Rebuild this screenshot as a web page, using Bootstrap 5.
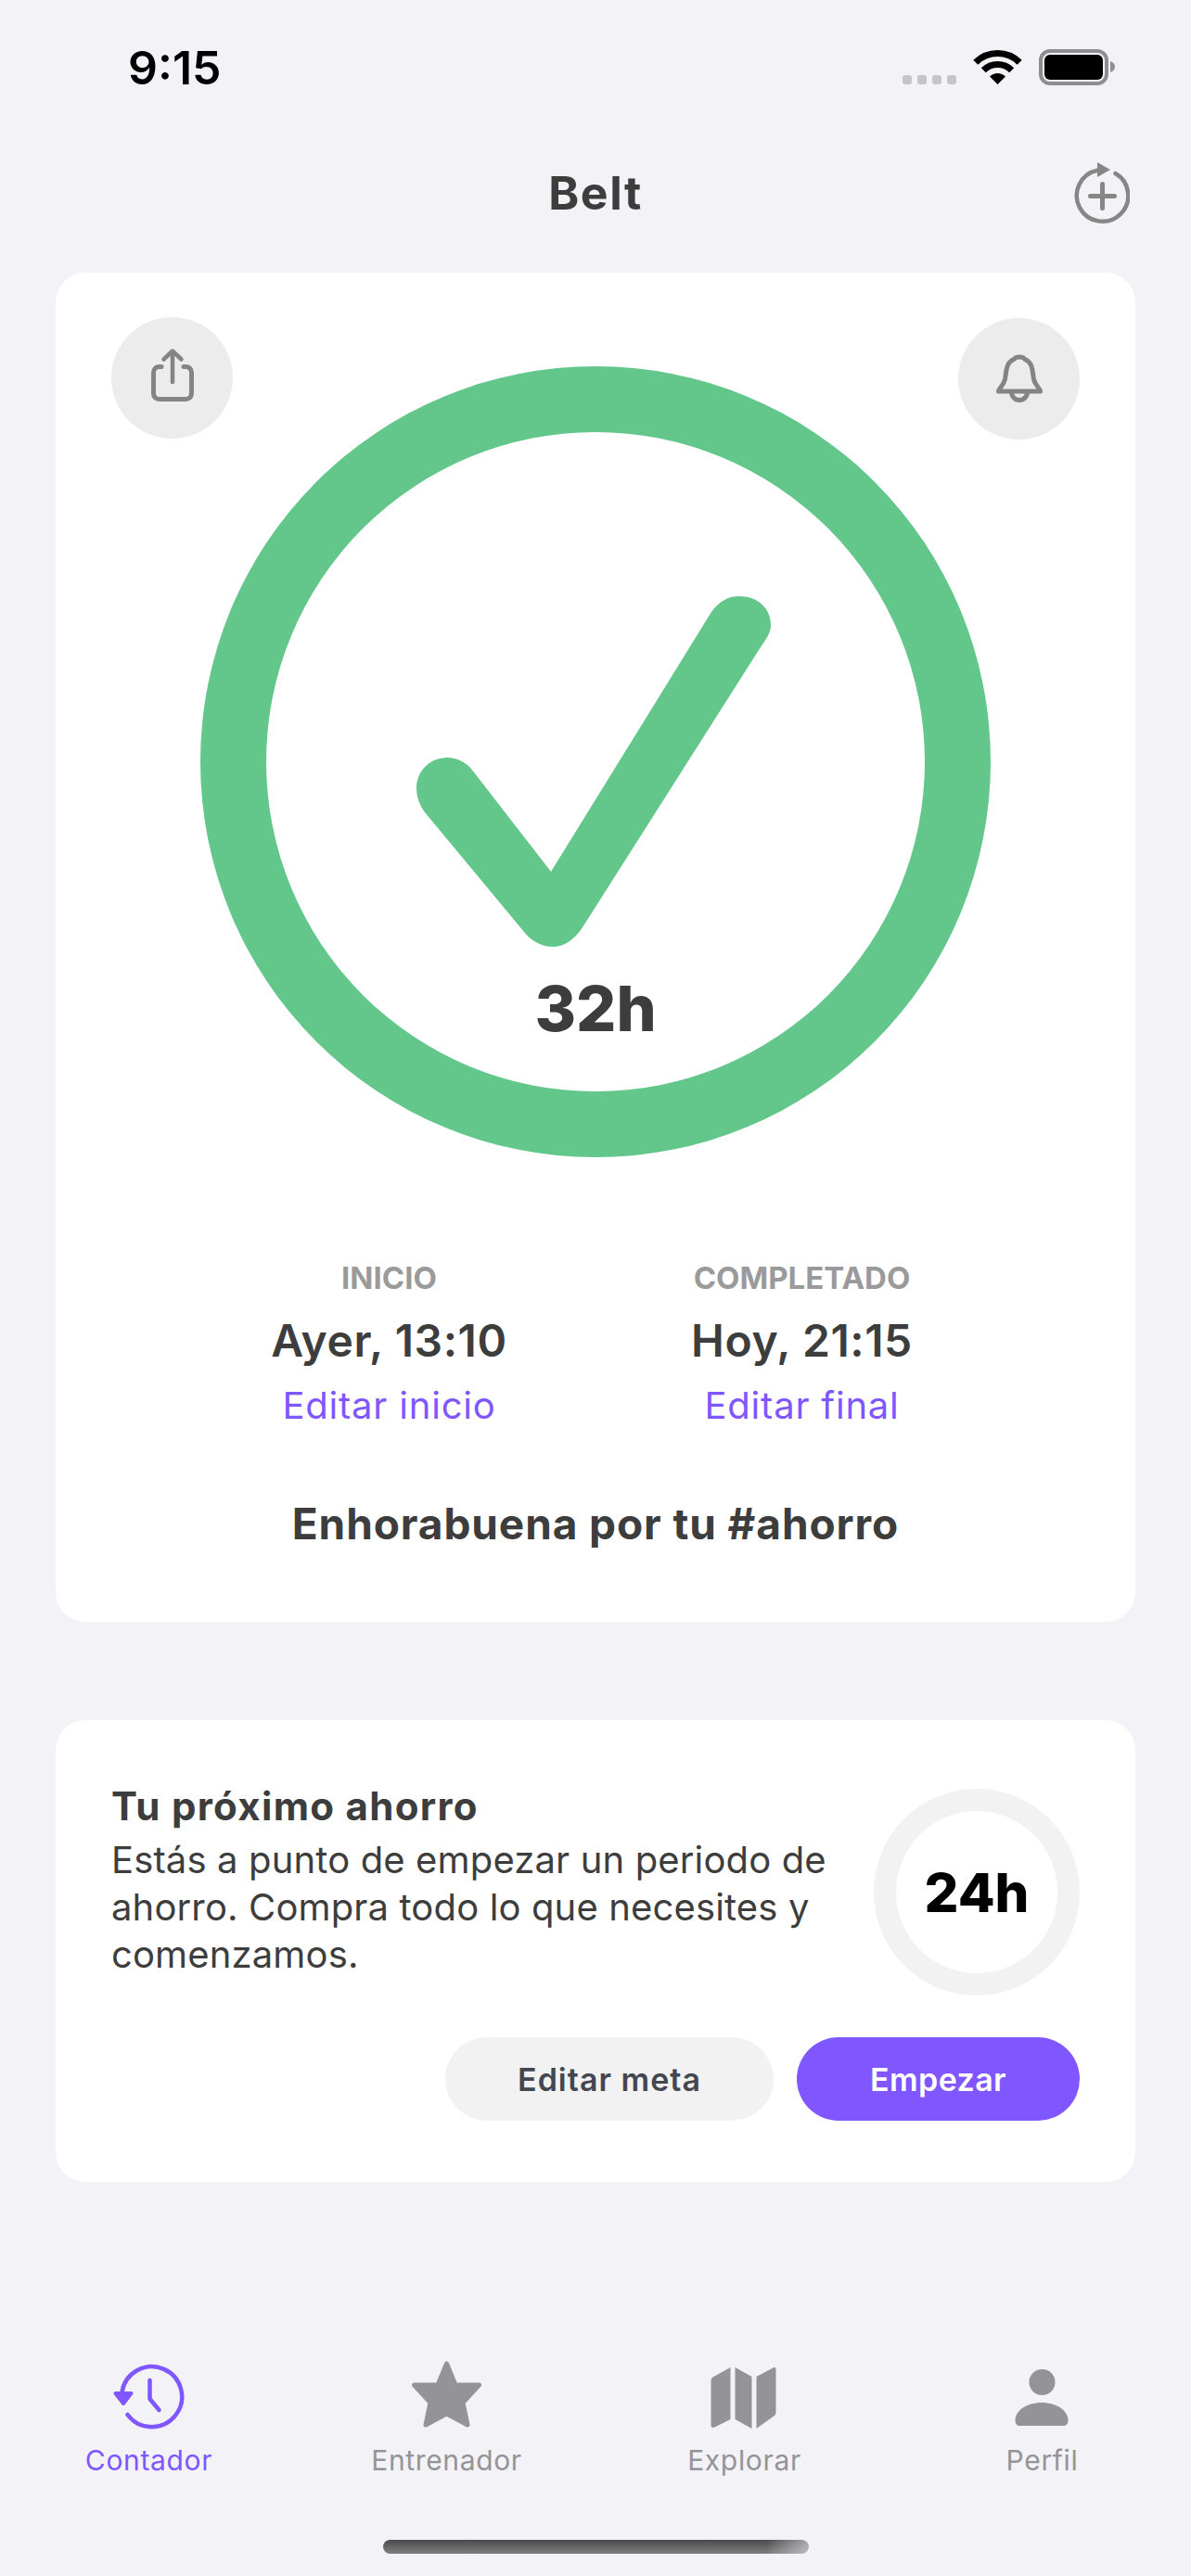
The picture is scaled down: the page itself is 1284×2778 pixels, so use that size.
<!DOCTYPE html>
<html lang="es">
<head>
  <meta charset="UTF-8">
  <meta name="viewport" content="width=device-width, initial-scale=1.0">
  <title>Belt</title>
  <link href="https://cdn.jsdelivr.net/npm/bootstrap@5.3.0/dist/css/bootstrap.min.css" rel="stylesheet">
  <style>
    body {
      background-color: #f2f2f7;
      color: #3d3d3d;
      font-family: Inter, "Liberation Sans", sans-serif;
      margin: 0;
    }
    .app-screen {
      min-height: 2778px;
      width: 1284px;
    }
    .status-row {
      height: 146px;
      padding: 0 79px 0 138px;
    }
    .status-time {
      color: #000;
      font-size: 50px;
      font-weight: 600;
      line-height: 60px;
    }
    .title-row {
      height: 148px;
      padding: 0 66px 24px;
    }
    .title-spacer { width: 60px; }
    .title-text {
      font-size: 50px;
      font-weight: 700;
      letter-spacing: 1.5px;
      line-height: 60px;
    }
    .sheet {
      background: #fff;
      border: 0;
      border-radius: 32px;
      margin: 0 60px;
    }
    .round-action {
      align-items: center;
      background: #ececec;
      border-radius: 50%;
      display: flex;
      height: 131px;
      justify-content: center;
      padding: 0;
      position: absolute;
      width: 131px;
    }
    .round-share { left: 60px; top: 48px; }
    .round-bell { right: 60px; top: 49px; }
    .big-ring {
      border: 71px solid #63c78b;
      border-radius: 50%;
      height: 853px;
      margin: 101px auto 0;
      padding-top: 174px;
      width: 852px;
    }
    .big-hours {
      font-size: 68px;
      font-weight: 800;
      line-height: 68px;
      margin-top: 13px;
    }
    .times-grid {
      margin: 110px auto 0;
      width: 890px;
    }
    .time-label {
      color: #9a9a9a;
      font-size: 33px;
      font-weight: 700;
      line-height: 40px;
    }
    .time-value {
      font-size: 48px;
      font-weight: 600;
      letter-spacing: .6px;
      line-height: 58px;
      margin-top: 19px;
    }
    .time-edit {
      color: #7f56ff;
      font-size: 40px;
      letter-spacing: .8px;
      line-height: 48px;
      margin-top: 17px;
    }
    .congrats {
      font-size: 46px;
      font-weight: 700;
      letter-spacing: .9px;
      line-height: 56px;
      margin: 75px 0 78px;
    }
    .next-sheet {
      margin-top: 106px;
      padding: 67px 60px 66px;
    }
    .next-title {
      font-size: 42px;
      font-weight: 700;
      letter-spacing: 1.3px;
      line-height: 52px;
    }
    .next-body {
      font-size: 40px;
      letter-spacing: .14px;
      line-height: 51px;
      margin-top: 6px;
      width: 800px;
    }
    .small-ring {
      align-items: center;
      border: 24px solid #f2f2f2;
      border-radius: 50%;
      color: #000;
      display: flex;
      flex-shrink: 0;
      font-size: 58px;
      font-weight: 800;
      height: 223px;
      justify-content: center;
      margin-top: 7px;
      padding-top: 2px;
      width: 222px;
    }
    .next-actions {
      gap: 25px;
      margin-top: 45px;
    }
    .pill-btn {
      border: 0;
      border-radius: 45px;
      font-size: 34px;
      font-weight: 600;
      height: 90px;
      padding: 0;
    }
    .pill-edit { background: #f2f2f2; color: #44474f; letter-spacing: 1px; width: 354px; }
    .pill-start { background: #7f56ff; color: #fff; letter-spacing: .4px; width: 305px; }
    .tab-strip { margin-top: auto; }
    .tab-name {
      color: #949498;
      font-size: 30px;
      letter-spacing: .65px;
      line-height: 36px;
      margin-top: 11px;
    }
    .tab-active { color: #7f56ff; }
    .home-bar {
      background:
        linear-gradient(to right, rgba(242, 242, 247, 0) 90%, rgba(242, 242, 247, .55)),
        linear-gradient(to bottom, #4a4a4c, #7f7f82);
      border-radius: 8px;
      height: 15px;
      margin: 68px auto 24px;
      width: 459px;
    }
  </style>
</head>
<body>
  <div class="app-screen d-flex flex-column">

    <div class="status-row d-flex justify-content-between align-items-center">
      <span class="status-time">9:15</span>
      <svg width="240" height="50" viewBox="965 48 240 50">
        <g fill="#c4c4c9">
          <rect x="973" y="81" width="10" height="10" rx="3"/>
          <rect x="989" y="81" width="10" height="10" rx="3"/>
          <rect x="1005" y="81" width="10" height="10" rx="3"/>
          <rect x="1021" y="81" width="10" height="10" rx="3"/>
        </g>
        <g fill="none" stroke="#000" stroke-width="7">
          <path d="M1051.8 67.3A33.5 33.5 0 0 1 1099.2 67.3"/>
          <path d="M1060.3 75.8A21.5 21.5 0 0 1 1090.7 75.8"/>
        </g>
        <path d="M1075.5 91L1067 82.5A12 12 0 0 1 1084 82.5Z" fill="#000"/>
        <rect x="1122" y="55" width="71" height="35" rx="10" fill="none" stroke="#8e8e90" stroke-width="4"/>
        <rect x="1126" y="59" width="63" height="27" rx="6" fill="#000"/>
        <path d="M1197 66C1200 67 1202 69 1202 72C1202 75 1200 77 1197 78Z" fill="#8e8e90"/>
      </svg>
    </div>

    <div class="title-row d-flex justify-content-between align-items-center">
      <div class="title-spacer"></div>
      <div class="title-text">Belt</div>
      <svg width="60" height="70" viewBox="1157 172 60 70">
        <g fill="none" stroke="#868686" stroke-linecap="round">
          <path d="M1201.5 186A27.75 27.75 0 1 1 1182 182.8" stroke-width="4.5"/>
          <path d="M1174.5 210.500H1200.500M1187.500 197.500V223.500" stroke-width="5"/>
        </g>
        <path d="M1182 174L1196 182L1182 190Z" fill="#868686"/>
      </svg>
    </div>

    <div class="card sheet position-relative">
      <div class="round-action round-share">
        <svg width="60" height="70" viewBox="155 373 60 70">
          <g fill="none" stroke="#848484" stroke-linecap="round" stroke-linejoin="round">
            <path d="M173 395.500H171C167 395.500 164.500 398 164.500 402V424C164.500 428 167 430.500 171 430.500H199C203 430.500 205.500 428 205.500 424V402C205.500 398 203 395.500 199 395.500H197" stroke-width="5"/>
            <path d="M185 412V379M175.500 387.500L185 378.500L194.500 387.500" stroke-width="4.500"/>
          </g>
        </svg>
      </div>
      <div class="round-action round-bell">
        <svg width="60" height="60" viewBox="1068 375 60 60">
          <g fill="none" stroke="#848484" stroke-width="5" stroke-linecap="round" stroke-linejoin="round">
            <path d="M1075.500 418C1075.500 415 1081 412 1082.500 405C1084 398 1083 387 1092 383.500C1094 380 1102 380 1104 383.500C1113 387 1112 398 1113.500 405C1115 412 1120.500 415 1120.500 418Z"/>
            <path d="M1089.500 419A8.500 8.500 0 0 0 1106.500 419"/>
          </g>
        </svg>
      </div>

      <div class="big-ring d-flex flex-column align-items-center">
        <svg class="flex-shrink-0" width="400" height="400" viewBox="442 640 400 400">
          <path d="M797 643C817 643 831 656 831 674C831 683 826 689 818 701L630 997C621 1012 609 1021 596 1021C583 1021 572 1014 565 1005L458 876C453 869 449 860 449 850C449 831 464 817 482 817C493 817 502 822 508 829L594 940L767 660C775 649 784 643 797 643Z" fill="#63c78b"/>
        </svg>
        <div class="big-hours">32h</div>
      </div>

      <div class="row g-0 times-grid text-center">
        <div class="col-6">
          <div class="time-label">INICIO</div>
          <div class="time-value">Ayer, 13:10</div>
          <div class="time-edit">Editar inicio</div>
        </div>
        <div class="col-6">
          <div class="time-label">COMPLETADO</div>
          <div class="time-value">Hoy, 21:15</div>
          <div class="time-edit">Editar final</div>
        </div>
      </div>

      <div class="congrats text-center">Enhorabuena por tu #ahorro</div>
    </div>

    <div class="card sheet next-sheet">
      <div class="d-flex justify-content-between">
        <div>
          <div class="next-title">Tu próximo ahorro</div>
          <div class="next-body">Estás a punto de empezar un periodo de ahorro. Compra todo lo que necesites y comenzamos.</div>
        </div>
        <div class="small-ring">24h</div>
      </div>
      <div class="d-flex justify-content-end next-actions">
        <button type="button" class="btn pill-btn pill-edit">Editar meta</button>
        <button type="button" class="btn pill-btn pill-start">Empezar</button>
      </div>
    </div>

    <div class="tab-strip">
      <div class="row g-0 text-center">
        <div class="col-3 d-flex flex-column align-items-center">
          <svg width="80" height="80" viewBox="120.500 2544 80 80">
            <g fill="none" stroke="#7f56ff" stroke-width="4.500" stroke-linecap="round" stroke-linejoin="round">
              <path d="M137 2604A32.500 32.500 0 1 0 131 2580"/>
              <path d="M161 2567V2587L171 2599"/>
            </g>
            <path d="M124 2581H141L132.500 2592Z" fill="#7f56ff" stroke="#7f56ff" stroke-width="4" stroke-linejoin="round"/>
          </svg>
          <div class="tab-name tab-active">Contador</div>
        </div>
        <div class="col-3 d-flex flex-column align-items-center">
          <svg width="80" height="80" viewBox="441.500 2544 80 80">
            <path d="M481 2549L490.500 2572H516L498.500 2591L503.500 2615L481 2603L458.500 2615L463.500 2591L446 2572H471.500Z" fill="#949498" stroke="#949498" stroke-width="5" stroke-linejoin="round"/>
          </svg>
          <div class="tab-name">Entrenador</div>
        </div>
        <div class="col-3 d-flex flex-column align-items-center">
          <svg width="80" height="80" viewBox="762.500 2544 80 80">
            <g fill="#949498">
              <path d="M766 2568C766 2565 767 2564 769 2563L787 2553V2609L771 2617C768 2619 766 2618 766 2615Z"/>
              <path d="M792 2553L810 2563V2619L792 2609Z"/>
              <path d="M815 2563L832 2554C835 2552 836 2553 836 2556V2601C836 2604 835 2605 833 2606L815 2619Z"/>
            </g>
          </svg>
          <div class="tab-name">Explorar</div>
        </div>
        <div class="col-3 d-flex flex-column align-items-center">
          <svg width="80" height="80" viewBox="1083.500 2544 80 80">
            <g fill="#949498">
              <circle cx="1123" cy="2569" r="14"/>
              <path d="M1094 2610C1094 2600 1106 2591 1122.500 2591C1139 2591 1151 2600 1151 2610C1151 2614 1149 2616 1146 2616H1099C1096 2616 1094 2614 1094 2610Z"/>
            </g>
          </svg>
          <div class="tab-name">Perfil</div>
        </div>
      </div>
      <div class="home-bar"></div>
    </div>

  </div>
  <script src="https://cdn.jsdelivr.net/npm/bootstrap@5.3.0/dist/js/bootstrap.bundle.min.js"></script>
</body>
</html>
